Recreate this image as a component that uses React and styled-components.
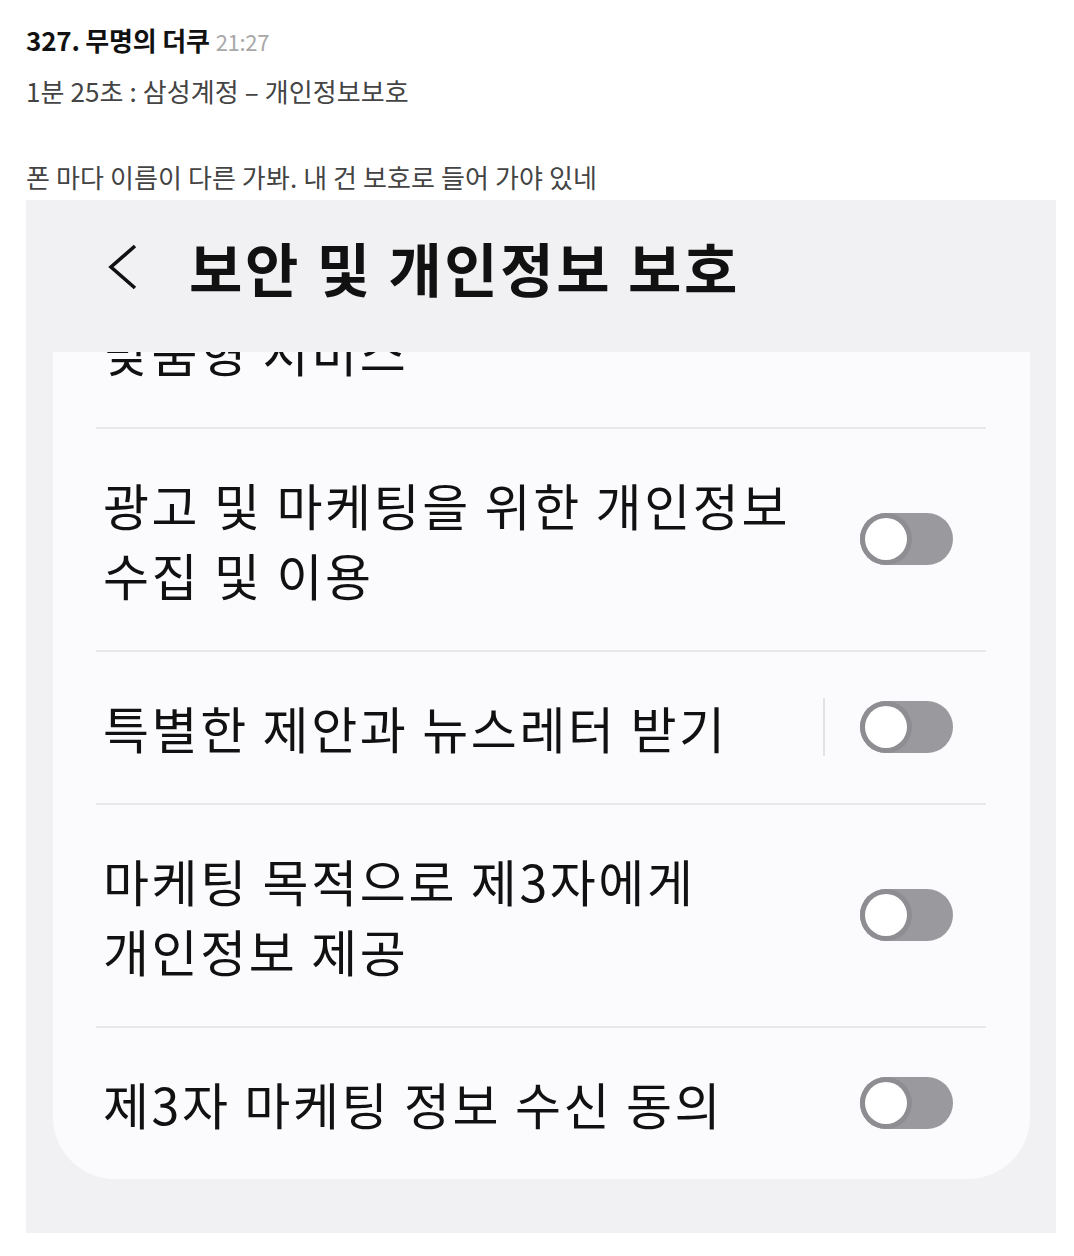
import React from "react";
import styled, { createGlobalStyle } from "styled-components";

const GlobalStyle = createGlobalStyle`
  body {
    margin: 0;
    background: #ffffff;
    font-family: "Noto Sans CJK KR", "Noto Sans", sans-serif;
  }
`;

const Page = styled.div`
  width: 1074px;
  padding: 0 18px 24px 26px;
  box-sizing: border-box;
`;

const PostHead = styled.div`
  height: 78px;
  display: flex;
  align-items: center;
  gap: 6px;
  padding-top: 2px;
  box-sizing: border-box;
`;

const Author = styled.span`
  font-size: 26px;
  font-weight: 700;
  color: #111;
  letter-spacing: -0.2px;
  line-height: 1;
`;

const Time = styled.span`
  font-size: 22px;
  color: #a8a8a8;
  letter-spacing: -0.3px;
  line-height: 1;
  margin-top: 2px;
`;

const Line = styled.p`
  margin: 0;
  padding-top: ${(p) => p.$top || 0}px;
  line-height: 26px;
  font-size: 26px;
  color: #444;
  letter-spacing: 0.1px;
`;

const Shot = styled.div`
  margin-top: 10px;
  width: 1030px;
  background: #f1f1f3;
  padding: 0 26px 54px 27px;
  box-sizing: border-box;
`;

const TitleBar = styled.div`
  height: 152px;
  display: flex;
  align-items: center;
  gap: 50px;
  padding: 0 0 18px 52px;
  box-sizing: border-box;
`;

const Title = styled.h1`
  margin: 0;
  font-size: 58px;
  font-weight: 700;
  color: #111;
  letter-spacing: 2.6px;
  line-height: 1;
`;

const Card = styled.div`
  background: #fbfbfd;
  border-radius: 0 0 62px 62px;
  overflow: hidden;
`;

const Row = styled.div`
  display: flex;
  align-items: center;
  margin: 0 44px 0 43px;
  padding: ${(p) => (p.$clipped ? "0 0 42px" : "40px 0 41px")};
  margin-top: ${(p) => (p.$clipped ? "-37px" : "0")};
  border-top: ${(p) => (p.$clipped ? "none" : "2px solid #e8e8ea")};
`;

const Label = styled.div`
  flex: 1;
  padding-left: 7px;
  font-size: 50px;
  line-height: 70px;
  color: #111;
  letter-spacing: 2.6px;
`;

const Sep = styled.div`
  width: 2px;
  height: 58px;
  background: #e2e2e4;
  margin-right: 35px;
`;

const Track = styled.div`
  width: 93px;
  height: 52px;
  border-radius: 26px;
  background: #9a9a9e;
  margin-right: 33px;
  flex-shrink: 0;
`;

const Thumb = styled.div`
  width: 52px;
  height: 52px;
  border-radius: 50%;
  background: #8e8e92;
  display: flex;
  align-items: center;
  justify-content: center;
  &::after {
    content: "";
    width: 42px;
    height: 42px;
    border-radius: 50%;
    background: #ffffff;
  }
`;

const Toggle = () => (
  <Track>
    <Thumb />
  </Track>
);

const BackIcon = () => (
  <svg width="34" height="48" viewBox="0 0 34 48">
    <polyline
      points="30,3 6,24 30,45"
      fill="none"
      stroke="#111"
      strokeWidth="3.6"
      strokeLinejoin="miter"
    />
  </svg>
);

const items = [
  { lines: ["광고 및 마케팅을 위한 개인정보", "수집 및 이용"] },
  { lines: ["특별한 제안과 뉴스레터 받기"], sep: true },
  { lines: ["마케팅 목적으로 제3자에게", "개인정보 제공"] },
  { lines: ["제3자 마케팅 정보 수신 동의"] },
];

export default function App() {
  return (
    <>
      <GlobalStyle />
      <Page>
        <PostHead>
          <Author>327. 무명의 더쿠</Author>
          <Time>21:27</Time>
        </PostHead>
        <Line>1분 25초 : 삼성계정 – 개인정보보호</Line>
        <Line $top={60}>폰 마다 이름이 다른 가봐. 내 건 보호로 들어 가야 있네</Line>
        <Shot>
          <TitleBar>
            <BackIcon />
            <Title>보안 및 개인정보 보호</Title>
          </TitleBar>
          <Card>
            <Row $clipped>
              <Label>맞춤형 서비스</Label>
            </Row>
            {items.map((it, i) => (
              <Row key={i}>
                <Label>
                  {it.lines.map((l) => (
                    <div key={l}>{l}</div>
                  ))}
                </Label>
                {it.sep && <Sep />}
                <Toggle />
              </Row>
            ))}
          </Card>
        </Shot>
      </Page>
    </>
  );
}
